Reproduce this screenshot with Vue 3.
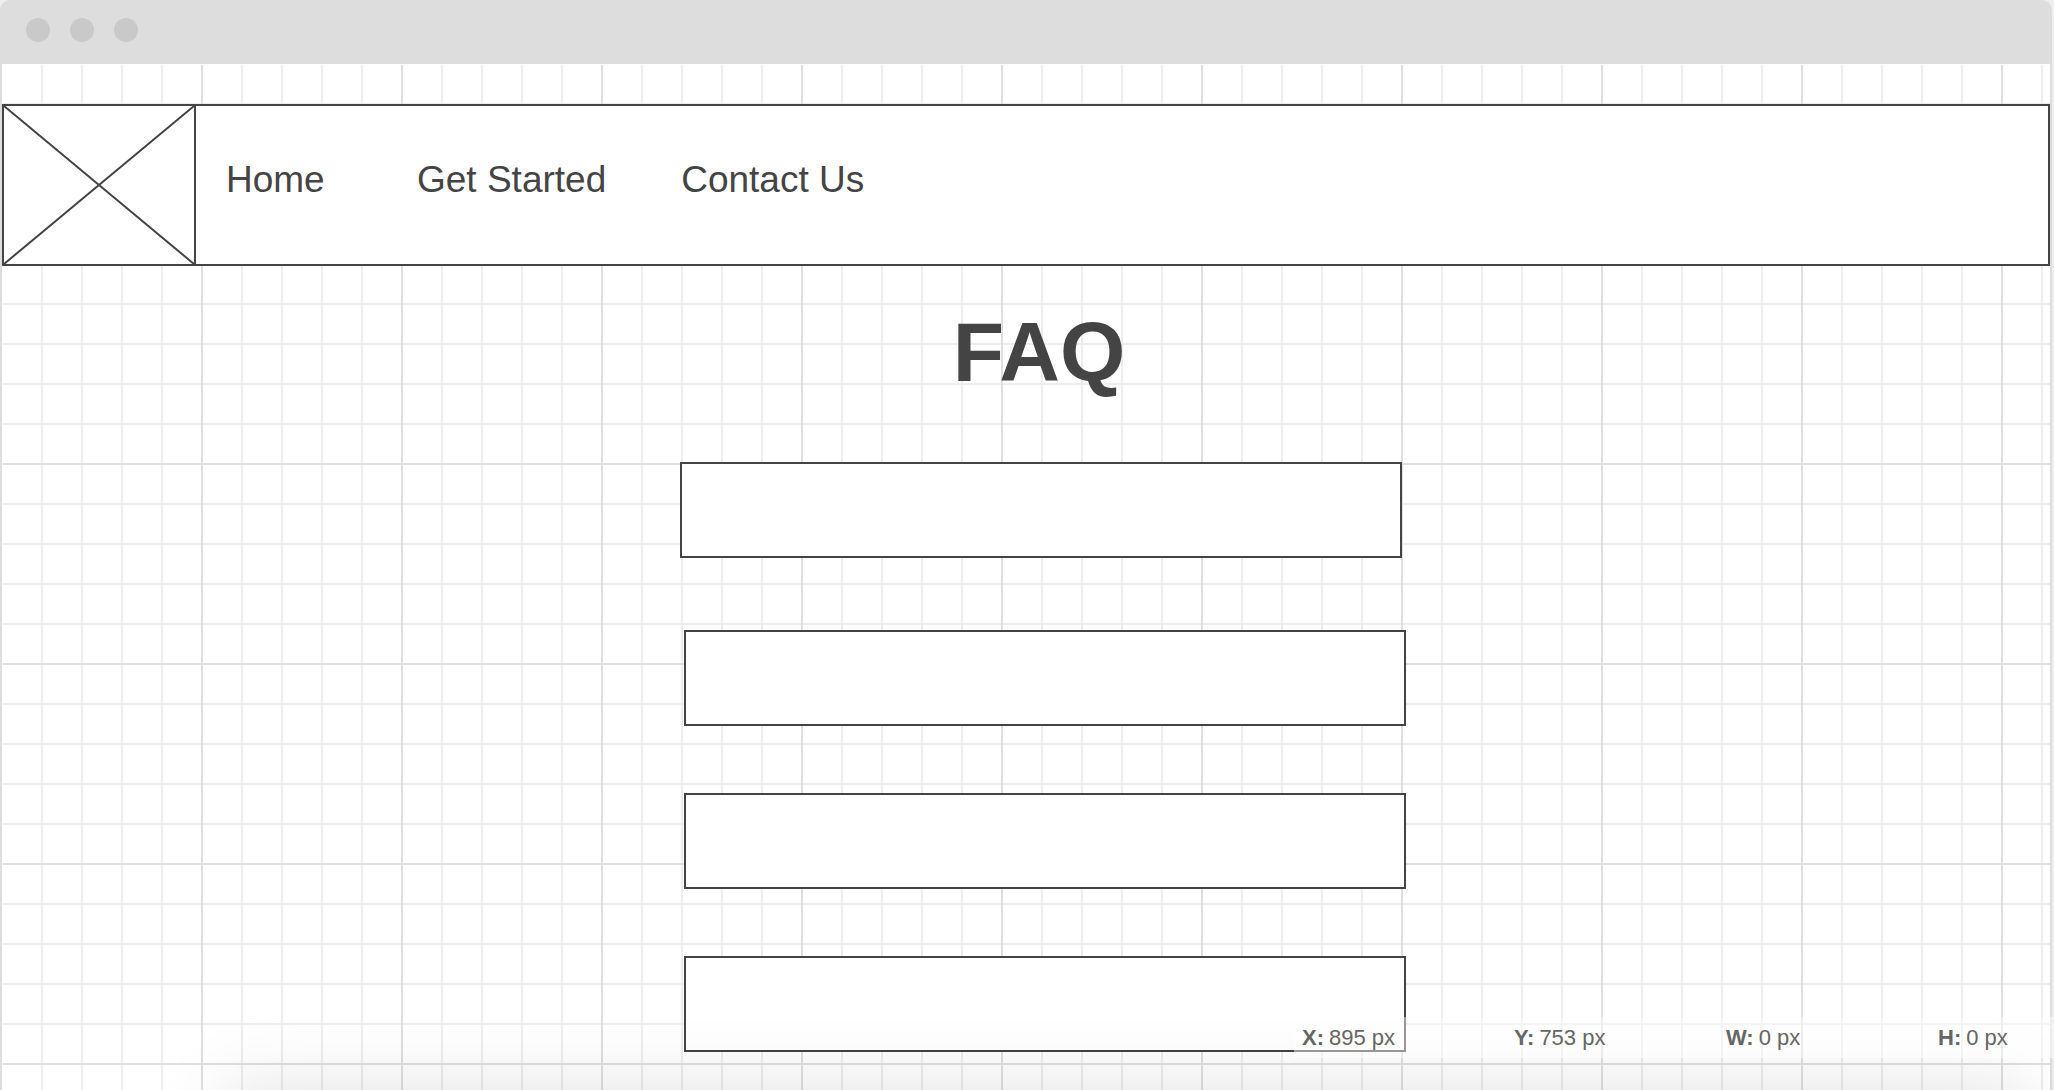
<script setup>
const links = ['Home', 'Get Started', 'Contact Us']
const questions = [1, 2, 3, 4]
const readouts = [
  { label: 'X', value: '895 px' },
  { label: 'Y', value: '753 px' },
  { label: 'W', value: '0 px' },
  { label: 'H', value: '0 px' },
]
</script>

<template>
  <div class="page">
    <div class="window">
      <header class="titlebar">
        <span v-for="n in 3" :key="n" class="dot"></span>
      </header>
      <main class="canvas">
        <nav class="nav">
          <svg class="logo" viewBox="0 0 190 158" preserveAspectRatio="none" aria-hidden="true">
            <path d="M0 0L190 158M190 0L0 158" fill="none" stroke="#444" stroke-width="2" />
          </svg>
          <div class="links">
            <a v-for="link in links" :key="link" href="#" class="link">{{ link }}</a>
          </div>
        </nav>
        <section class="faq">
          <h1 class="title">FAQ</h1>
          <ul class="list">
            <li v-for="q in questions" :key="q" class="item"></li>
          </ul>
        </section>
      </main>
    </div>
    <div class="shade"></div>
    <dl class="status">
      <div v-for="r in readouts" :key="r.label" class="readout">
        <dt>{{ r.label }}:</dt>
        <dd>{{ r.value }}</dd>
      </div>
    </dl>
  </div>
</template>

<style>
body {
  margin: 0;
  background: #eee;
}
</style>

<style scoped>
.page {
  position: relative;
  display: flex;
  min-height: 100vh;
  overflow: hidden;
  padding-right: 2px;
  box-sizing: border-box;
  background: #eee;
  color: #444;
  font-family: "Liberation Sans", Arial, sans-serif;
}
.window {
  flex: 1;
  display: flex;
  flex-direction: column;
  border-radius: 10px 10px 0 0;
  overflow: hidden;
  background: #ddd;
}
.titlebar {
  display: flex;
  align-items: center;
  gap: 20px;
  height: 64px;
  padding: 0 26px 4px;
  box-sizing: border-box;
}
.dot {
  width: 24px;
  height: 24px;
  border-radius: 50%;
  background: #c9c9c9;
}
.canvas {
  flex: 1;
  margin: 0 2px;
  padding-top: 40px;
  background-color: #fff;
  background-image:
    linear-gradient(#fff, #fff),
    linear-gradient(#fff, #fff),
    linear-gradient(to right, transparent 198px, #dfdfdf 198px),
    linear-gradient(to bottom, transparent 198px, #dfdfdf 198px),
    linear-gradient(to right, transparent 38px, #ededed 38px),
    linear-gradient(to bottom, transparent 38px, #ededed 38px);
  background-size: 100% 1px, 1px 100%, 200px 200px, 200px 200px, 40px 40px, 40px 40px;
  background-position: 0 0, 0 0, 1px 1px, 1px 1px, 1px 1px, 1px 1px;
  background-repeat: no-repeat, no-repeat, repeat, repeat, repeat, repeat;
}
.nav {
  display: flex;
  border: 2px solid #444;
  background: #fff;
}
.logo {
  display: block;
  width: 190px;
  height: 158px;
  border-right: 2px solid #444;
}
.links {
  display: flex;
  align-items: center;
  gap: 75px;
  padding: 0 0 10px 30px;
}
.link {
  min-width: 116px;
  color: #444;
  font-size: 37px;
  line-height: 42px;
  text-decoration: none;
  white-space: nowrap;
}
.faq {
  display: flex;
  flex-direction: column;
  align-items: center;
  padding: 38px 0 36px 34px;
}
.title {
  margin: 0 0 62px;
  padding-right: 8px;
  font-size: 84px;
  line-height: 96px;
  font-weight: 700;
}
.list {
  display: flex;
  flex-direction: column;
  align-items: flex-end;
  gap: 67px;
  width: 726px;
  margin: 0;
  padding: 0;
  list-style: none;
}
.item {
  width: 722px;
  height: 96px;
  box-sizing: border-box;
  border: 2px solid #444;
  background: #fff;
}
.item:first-child {
  align-self: flex-start;
  margin-bottom: 5px;
}
.shade {
  position: absolute;
  top: 100%;
  left: 225px;
  right: 25px;
  height: 200px;
  box-shadow: 0 0 80px rgba(0, 0, 0, 0.12);
}
.status {
  position: absolute;
  right: 0;
  bottom: 32px;
  display: flex;
  width: 760px;
  height: 41px;
  margin: 0;
  padding-left: 8px;
  box-sizing: border-box;
  background: rgba(255, 255, 255, 0.45);
  color: #666;
  font-size: 22px;
  line-height: 41px;
}
.readout {
  display: flex;
  gap: 5px;
  flex: 0 0 212px;
  white-space: nowrap;
}
.readout dt {
  font-weight: 700;
}
.readout dd {
  margin: 0;
}
</style>
